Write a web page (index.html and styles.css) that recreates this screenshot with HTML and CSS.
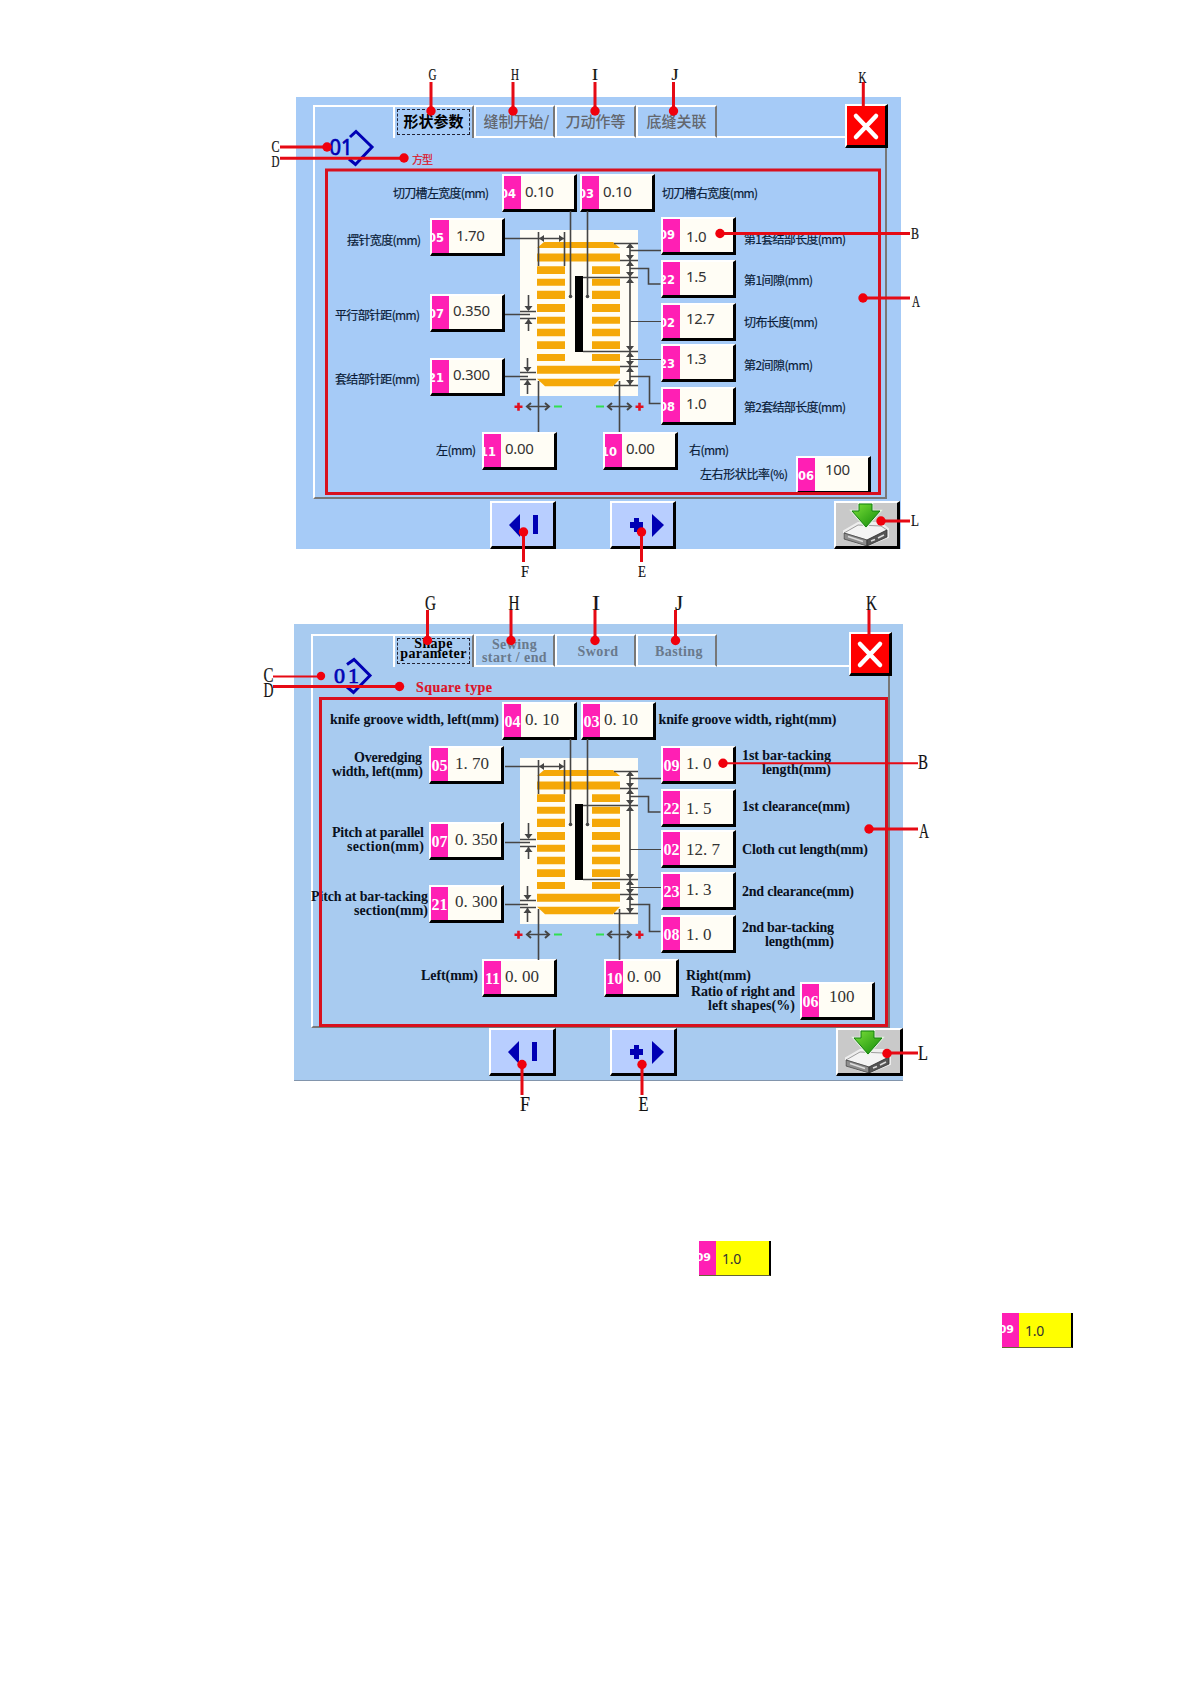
FILE: index.html
```
<!DOCTYPE html>
<html lang="zh-CN">
<head>
  <meta charset="UTF-8">
  <title>Shape parameter</title>
  <link rel="stylesheet" href="styles.css">
</head>
<body>
  <section class="figure figure-cn">
    <div class="screen">
      <div class="tabs">
        <div class="tab-lead"></div>
        <div class="tab active"><span>形状参数</span></div>
        <div class="tab"><span>缝制开始/</span></div>
        <div class="tab"><span>刀动作等</span></div>
        <div class="tab"><span>底缝关联</span></div>
        <div class="tab-fill"></div>
      </div>
      <div class="sheet"></div>
      <div class="footer">
        <button class="btn"><svg width="60" height="43"><use href="#prev"/></svg></button>
        <button class="btn"><svg width="60" height="43"><use href="#next"/></svg></button>
        <button class="btn save"><svg width="60" height="43"><use href="#disk"/></svg></button>
      </div>
      <button class="close"><svg width="38" height="38"><path d="M9 9L29 30M29 9L9 30"/></svg></button>
      <div class="field f04"><b>04</b><i>0.10</i></div>
      <div class="field f03"><b>03</b><i>0.10</i></div>
      <div class="field f05"><b>05</b><i>1.70</i></div>
      <div class="field f07"><b>07</b><i>0.350</i></div>
      <div class="field f21"><b>21</b><i>0.300</i></div>
      <div class="field f11"><b>11</b><i>0.00</i></div>
      <div class="field f10"><b>10</b><i>0.00</i></div>
      <div class="field f09"><b>09</b><i>1.0</i></div>
      <div class="field f22"><b>22</b><i>1.5</i></div>
      <div class="field f02"><b>02</b><i>12.7</i></div>
      <div class="field f23"><b>23</b><i>1.3</i></div>
      <div class="field f08"><b>08</b><i>1.0</i></div>
      <div class="field f06"><b>06</b><i>100</i></div>
    </div>

    <svg class="overlay" viewBox="0 0 1190 590" width="1190" height="590">
      <defs>
        <g id="prev">
          <path d="M17 22L28 11V34z" fill="#0000b4"/>
          <path d="M41 12h5v19h-5z" fill="#0000b4"/>
        </g>
        <g id="next">
          <path d="M22 15h5v4h4v6h-4v4h-5v-4h-4v-6h4z" fill="#0000b4"/>
          <path d="M40 11L52 22L40 34z" fill="#0000b4"/>
        </g>
        <linearGradient id="green" x1="0" y1="0" x2="1" y2="1">
          <stop offset="0" stop-color="#7be03a"/>
          <stop offset="1" stop-color="#118a08"/>
        </linearGradient>
        <g id="disk">
          <path d="M8 28L22 20H45L52 26V34L30 43L8 35z" fill="#eee" stroke="#eee" stroke-width="2"/>
          <path d="M8 30L22 22L45 23L51 27L31 37z" fill="#f4f4f4" stroke="#777" stroke-width=".7"/>
          <path d="M8 30L31 37V43L8 36z" fill="#8d8d8d" stroke="#444" stroke-width=".8"/>
          <path d="M31 37L51 27V34L31 43z" fill="#555" stroke="#333" stroke-width=".8"/>
          <path d="M12 33.500L27 38.500" stroke="#ddd" stroke-width="1.500"/>
          <path d="M35 38L39 36.500M42 35L48 32" stroke="#ddd" stroke-width="1.500"/>
          <path d="M23 1H36V8H44L30 24L16 8H23z" fill="url(#green)" stroke="#e5f5e0" stroke-width="2.500"/>
          <path d="M23 1H36V8H44L30 24L16 8H23z" fill="url(#green)" stroke="#128010"/>
        </g>

        <!-- stitch pattern with its dimension lines -->
        <g id="stitch">
          <path d="M520 230h118v166H520z" fill="#fffdf5"/>
          <g fill="#f5a808">
            <path d="M537 248L544 242H613L620 248z"/>
            <path d="M537 253.500h83v8h-83zM537 365.700h83v8h-83z"/>
            <path d="M537 378.700H620L613 386.300H545z"/>
            <path d="M537 266.300h28v7.700h-28zM537 278.700h28v7h-28zM537 290.700h28v8.300h-28zM537 304h28v8h-28zM537 316.700h28v7h-28zM537 328.700h28v7.600h-28zM537 341.300h28v7.700h-28zM537 354h28v7h-28z"/>
            <path d="M592 266.300h28v7.700h-28zM592 278.700h28v7h-28zM592 290.700h28v8.300h-28zM592 304h28v8h-28zM592 316.700h28v7h-28zM592 328.700h28v7.600h-28zM592 341.300h28v7.700h-28zM592 354h28v7h-28z"/>
          </g>
          <path d="M575 276h8v76h-8z"/>
          <g fill="none" stroke="#454545" stroke-width="1.600">
            <path d="M583 277.500h55M583 351.500h55M614 243.500h24M620 260.500h18M620 366.500h18M614 385.500h24M630 243v143"/>
            <path d="M630 250.500h31M630 268.500h18.500v15.500h12M630 376.500h19.500v27h11"/>
            <path d="M630 321.500h31M630 359.500h31" stroke-width="1"/>
            <path d="M505 238.500h59M538.500 232v34M564.500 232v34M570.500 211v85M587.500 211v85"/>
            <path d="M520 311.500h16M520 318.500h16M505 314.500h25M528.500 295v15M528.500 319v12"/>
            <path d="M520 372.500h16M520 379.500h16M505 376.500h23M527.500 358v13M527.500 380v14"/>
            <path d="M538.500 381v51M619.500 381v51M528 406.500h21M609 406.500h21"/>
            <path d="M531 403l-4 3.500l4 3.500M545 403l4 3.500l-4 3.500M612 403l-4 3.500l4 3.500M627 403l4 3.500l-4 3.500" stroke-width="2"/>
          </g>
          <g fill="#454545">
            <path d="M630 243l-4 5h8zM630 260l-4-5h8zM630 261l-4 5h8zM630 277l-4-5h8zM630 278l-4 5h8zM630 351l-4-5h8zM630 352l-4 5h8zM630 366l-4-5h8zM630 367l-4 5h8zM630 385l-4-5h8z"/>
            <path d="M539 238.500l5-3.500v7zM564 238.500l-5-3.500v7zM528.500 311l-4-5h8zM528.500 319l-4 5h8zM527.500 372l-4-5h8zM527.500 380l-4 5h8z"/>
            <circle cx="570.500" cy="296.500" r="1.800"/><circle cx="587.500" cy="296.500" r="1.800"/>
          </g>
          <path d="M514.500 406.700h8M518.500 402.700v8M635.500 406.700h8M639.500 402.700v8" stroke="#e01020" stroke-width="2.600"/>
          <path d="M554 406.500h8M596 406.500h8" stroke="#30e050" stroke-width="2"/>
        </g>
      </defs>

      <use href="#stitch"/>
      <path class="diamond" d="M350 137L356 131.500L372 147L355.500 164.500L349 159"/>
      <text class="program" x="329.500" y="154.500" textLength="23" lengthAdjust="spacingAndGlyphs">01</text>
      <text class="type" x="412" y="164" textLength="21">方型</text>
      <g class="labels">
        <text x="393" y="198" textLength="96">切刀槽左宽度(mm)</text>
        <text x="662" y="198" textLength="96">切刀槽右宽度(mm)</text>
        <text x="347" y="245" textLength="74">摆针宽度(mm)</text>
        <text x="335" y="320" textLength="85">平行部针距(mm)</text>
        <text x="335" y="384" textLength="85">套结部针距(mm)</text>
        <text x="436" y="455" textLength="40">左(mm)</text>
        <text x="689" y="455" textLength="40">右(mm)</text>
        <text x="700" y="479" textLength="88">左右形状比率(%)</text>
        <text x="744" y="244" textLength="102">第1套结部长度(mm)</text>
        <text x="744" y="285" textLength="69">第1间隙(mm)</text>
        <text x="744" y="327" textLength="74">切布长度(mm)</text>
        <text x="744" y="370" textLength="69">第2间隙(mm)</text>
        <text x="744" y="412" textLength="102">第2套结部长度(mm)</text>
      </g>
      <path class="area" d="M326.500 170H879.500V493.500H326.500z"/>

      <g class="leads">
        <path d="M431 82v29M513 82v29M595 82v29M673.500 82v29M863.300 82v25M280 147h47M280 158.300h124M720 233.500h190M863 298h47M881 521h29M523.500 532v30M641.500 532v30"/>
        <circle cx="431" cy="111" r="4.700"/><circle cx="513" cy="111" r="4.700"/>
        <circle cx="595" cy="111" r="4.700"/><circle cx="673.500" cy="111" r="4.700"/>
        <circle cx="327" cy="147" r="4.700"/><circle cx="404" cy="158" r="4.700"/>
        <circle cx="720" cy="233.500" r="4.700"/><circle cx="863" cy="298" r="4.700"/>
        <circle cx="881" cy="521" r="4.700"/><circle cx="523.500" cy="532" r="4.700"/>
        <circle cx="641.500" cy="532" r="4.700"/>
      </g>
      <g class="letters">
        <text x="428.500" y="80" textLength="8" lengthAdjust="spacingAndGlyphs">G</text>
        <text x="511" y="80" textLength="8" lengthAdjust="spacingAndGlyphs">H</text>
        <text x="592" y="80" textLength="6" lengthAdjust="spacingAndGlyphs">I</text>
        <text x="671.500" y="80" textLength="7" lengthAdjust="spacingAndGlyphs">J</text>
        <text x="858.500" y="83" textLength="8" lengthAdjust="spacingAndGlyphs">K</text>
        <text x="271.500" y="152" textLength="8" lengthAdjust="spacingAndGlyphs">C</text>
        <text x="271.500" y="166.500" textLength="8" lengthAdjust="spacingAndGlyphs">D</text>
        <text x="911" y="238.500" textLength="8" lengthAdjust="spacingAndGlyphs">B</text>
        <text x="912" y="307" textLength="8" lengthAdjust="spacingAndGlyphs">A</text>
        <text x="911" y="526" textLength="8" lengthAdjust="spacingAndGlyphs">L</text>
        <text x="521" y="577" textLength="8" lengthAdjust="spacingAndGlyphs">F</text>
        <text x="638" y="577" textLength="8" lengthAdjust="spacingAndGlyphs">E</text>
      </g>
    </svg>
  </section>

  <section class="figure figure-en" lang="en">
    <div class="screen">
      <div class="tabs">
        <div class="tab-lead"></div>
        <div class="tab active"><span>Shape<br>parameter</span></div>
        <div class="tab"><span>Sewing<br>start / end</span></div>
        <div class="tab"><span>Sword</span></div>
        <div class="tab"><span>Basting</span></div>
        <div class="tab-fill"></div>
      </div>
      <div class="sheet"></div>
      <div class="footer">
        <button class="btn"><svg width="60" height="43"><use href="#prev"/></svg></button>
        <button class="btn"><svg width="60" height="43"><use href="#next"/></svg></button>
        <button class="btn save"><svg width="60" height="43"><use href="#disk"/></svg></button>
      </div>
      <button class="close"><svg width="38" height="38"><path d="M9 9L29 30M29 9L9 30"/></svg></button>
      <div class="field f04"><b>04</b><i>0. 10</i></div>
      <div class="field f03"><b>03</b><i>0. 10</i></div>
      <div class="field f05"><b>05</b><i>1. 70</i></div>
      <div class="field f07"><b>07</b><i>0. 350</i></div>
      <div class="field f21"><b>21</b><i>0. 300</i></div>
      <div class="field f11"><b>11</b><i>0. 00</i></div>
      <div class="field f10"><b>10</b><i>0. 00</i></div>
      <div class="field f09"><b>09</b><i>1. 0</i></div>
      <div class="field f22"><b>22</b><i>1. 5</i></div>
      <div class="field f02"><b>02</b><i>12. 7</i></div>
      <div class="field f23"><b>23</b><i>1. 3</i></div>
      <div class="field f08"><b>08</b><i>1. 0</i></div>
      <div class="field f06"><b>06</b><i>100</i></div>
    </div>

    <svg class="overlay" viewBox="0 590 1190 540" width="1190" height="540">
      <use href="#stitch" y="528"/>
      <path class="diamond" d="M347 664.500L354 659.500L370 675.500L353.500 692.500L347 687"/>
      <text class="program" x="334" y="682.500" textLength="25">01</text>
      <text class="type" x="416" y="692" textLength="76">Square type</text>
      <g class="labels">
        <text x="330" y="724" textLength="169">knife groove width, left(mm)</text>
        <text x="658.500" y="724" textLength="178">knife groove width, right(mm)</text>
        <text x="354" y="762" textLength="68">Overedging</text>
        <text x="332" y="775.500" textLength="91">width, left(mm)</text>
        <text x="332" y="837" textLength="92">Pitch at parallel</text>
        <text x="347" y="850.500" textLength="77">section(mm)</text>
        <text x="311" y="900.500" textLength="117">Pitch at bar-tacking</text>
        <text x="354" y="915" textLength="74">section(mm)</text>
        <text x="421" y="980" textLength="57">Left(mm)</text>
        <text x="686" y="980" textLength="65">Right(mm)</text>
        <text x="691" y="996" textLength="104">Ratio of right and</text>
        <text x="708" y="1009.500" textLength="87">left shapes(%)</text>
        <text x="742" y="760" textLength="89">1st bar-tacking</text>
        <text x="762" y="774" textLength="69">length(mm)</text>
        <text x="742" y="811" textLength="108">1st clearance(mm)</text>
        <text x="742" y="853.500" textLength="126">Cloth cut length(mm)</text>
        <text x="742" y="896" textLength="112">2nd clearance(mm)</text>
        <text x="742" y="931.500" textLength="92">2nd bar-tacking</text>
        <text x="765" y="946" textLength="69">length(mm)</text>
      </g>
      <path class="area" d="M320.500 698.500H886.500V1025.500H320.500z"/>

      <g class="leads">
        <path d="M427.500 610v30M511 610v30M595 610v30M675.500 610v30M869 610v26M273 686.500h126M869 829h49M887 1053h31M522 1065v30M642 1065v30"/>
        <path class="thin" d="M273 676.500h48M723 763.300h195"/>
        <circle cx="427.500" cy="640.500" r="4.700"/><circle cx="511" cy="640.500" r="4.700"/>
        <circle cx="595" cy="640.500" r="4.700"/><circle cx="675.500" cy="640.500" r="4.700"/>
        <circle cx="321" cy="676" r="4.200"/><circle cx="399.500" cy="686.500" r="4.700"/>
        <circle cx="723" cy="763.300" r="4.700"/><circle cx="869" cy="829" r="4.700"/>
        <circle cx="887" cy="1053.500" r="4.700"/><circle cx="522" cy="1064.500" r="4.700"/>
        <circle cx="642" cy="1064.500" r="4.700"/>
      </g>
      <g class="letters">
        <text x="425" y="609.500" textLength="11" lengthAdjust="spacingAndGlyphs">G</text>
        <text x="508.500" y="609.500" textLength="11" lengthAdjust="spacingAndGlyphs">H</text>
        <text x="592" y="609.500" textLength="8" lengthAdjust="spacingAndGlyphs">I</text>
        <text x="675" y="609.500" textLength="8" lengthAdjust="spacingAndGlyphs">J</text>
        <text x="866" y="609.500" textLength="11" lengthAdjust="spacingAndGlyphs">K</text>
        <text x="263.500" y="682" textLength="10" lengthAdjust="spacingAndGlyphs">C</text>
        <text x="263.500" y="696.500" textLength="10" lengthAdjust="spacingAndGlyphs">D</text>
        <text x="918" y="769" textLength="10" lengthAdjust="spacingAndGlyphs">B</text>
        <text x="919" y="838" textLength="10" lengthAdjust="spacingAndGlyphs">A</text>
        <text x="918" y="1059.500" textLength="10" lengthAdjust="spacingAndGlyphs">L</text>
        <text x="520" y="1111" textLength="10" lengthAdjust="spacingAndGlyphs">F</text>
        <text x="638.500" y="1111" textLength="10" lengthAdjust="spacingAndGlyphs">E</text>
      </g>
    </svg>
  </section>

  <section class="samples">
    <div class="chip"><b>09</b><i>1.0</i></div>
    <div class="chip second"><b>09</b><i>1.0</i></div>
  </section>
</body>
</html>
```
FILE: styles.css
```
* {
  box-sizing: border-box;
}
body {
  margin: 0;
  background: #fff;
  font-family: "Noto Sans", "Noto Sans CJK SC", sans-serif;
}
.figure {
  position: relative;
  width: 1190px;
}
.figure-cn {
  height: 590px;
  padding: 97px 0 0 296px;
}
.figure-en {
  height: 540px;
  padding: 34px 0 0 294px;
}
.overlay {
  position: absolute;
  left: 0;
  top: 0;
  pointer-events: none;
}

/* Screen */
.screen {
  position: relative;
  display: flex;
  flex-direction: column;
  width: 605px;
  height: 452px;
  padding: 8px 0 0 17px;
  background: #a6cbf7;
}
.figure-en .screen {
  width: 609px;
  height: 457px;
  padding-top: 10px;
  background: #a8cbf0;
  border-bottom: 1px solid #8295ac;
}
.tabs {
  display: flex;
  width: 574px;
  height: 33px;
}
.tab-lead {
  width: 80px;
  border-top: 2px solid #fff;
  border-left: 2px solid #fff;
}
.tab {
  display: flex;
  align-items: center;
  justify-content: center;
  width: 81px;
  overflow: hidden;
  border-top: 2px solid #fff;
  border-left: 2px solid #fff;
  border-right: 2px solid #777;
  border-bottom: 2px solid #fff;
  color: #63676e;
  font: 500 15px "Noto Sans CJK SC", sans-serif;
  white-space: nowrap;
}
.figure-cn .tab:nth-child(3) {
  padding-left: 4px;
}
.figure-cn .tab:nth-child(n+3) span {
  margin-top: -2px;
}
.tab.active {
  border-bottom: 0;
  padding: 1px 2px 3px;
  color: #000;
  font-weight: 700;
}
.tab.active span {
  flex: 1;
  height: 26px;
  line-height: 21px;
  text-align: center;
  border: 1.5px dashed #223;
}
.tab-fill {
  flex: 1;
  border-bottom: 2px solid #fff;
}
.figure-en .tab-lead {
  width: 82px;
}
.figure-en .tab {
  font: bold 14px/13px "Liberation Serif", serif;
  letter-spacing: 0.4px;
  text-align: center;
  color: #69798c;
}
.figure-en .tab:nth-child(n+4) {
  padding: 2px 0 0 5px;
}
.figure-en .tab.active {
  color: #000;
}
.figure-en .tab.active span {
  line-height: 10.5px;
}
.sheet {
  width: 574px;
  height: 361px;
  border-left: 2px solid #fff;
  border-right: 2px solid #777;
  border-bottom: 2px solid #777;
}
.footer {
  display: flex;
  gap: 54px;
  padding: 2px 1px 0 177px;
}
.figure-en .sheet {
  width: 579px;
}
.figure-en .footer {
  gap: 54px;
  padding: 0 0 0 178px;
}
.btn,
.close {
  padding: 0;
  border: solid;
  border-width: 2px 3px 3px 2px;
  border-color: #fff #000 #000 #fff;
}
.btn {
  width: 66px;
  height: 48px;
  background: #b8ceff;
}
.figure-en .btn {
  width: 67px;
}
.btn svg,
.close svg {
  display: block;
}
.btn.save {
  margin-left: auto;
  background: #c9c9c9;
}
.close {
  position: absolute;
  left: 549px;
  top: 7px;
  width: 43px;
  height: 44px;
  background: #f00;
}
.figure-en .close {
  left: 555px;
  top: 8px;
}
.close path {
  stroke: #fff;
  stroke-width: 4.5;
  stroke-linecap: round;
}

/* Parameter fields */
.field {
  position: absolute;
  display: flex;
  width: 75px;
  height: 38px;
  border: solid;
  border-width: 2px 3px 3px 2px;
  border-color: #fff #000 #000 #fff;
  background: #fffdf5;
}
.field b,
.chip b {
  display: flex;
  justify-content: flex-end;
  width: 17px;
  padding-right: 5px;
  overflow: hidden;
  background: #ff1fb4;
  color: #fff;
  font: bold 11.5px/37px "DejaVu Sans", sans-serif;
}
.field i,
.chip i {
  padding-left: 4px;
  font: 15px/28px "Noto Sans", sans-serif;
  letter-spacing: -0.3px;
  color: #333;
}
.f04 { left: 206px; top: 77px; }
.f03 { left: 284px; top: 77px; }
.f05 { left: 134px; top: 121px; }
.f07 { left: 134px; top: 197px; }
.f21 { left: 134px; top: 261px; }
.f11 { left: 186px; top: 335px; }
.f10 { left: 307px; top: 335px; }
.f09 { left: 365px; top: 120px; }
.f22 { left: 365px; top: 163px; }
.f02 { left: 365px; top: 206px; }
.f23 { left: 365px; top: 247px; }
.f08 { left: 365px; top: 290px; }
.f06 { left: 500px; top: 359px; }
.f04 i, .f03 i { line-height: 31px; }
.f05 i { padding-left: 7px; line-height: 31px; }
.f09 i { line-height: 35px; }
.f09 i, .f22 i, .f02 i, .f23 i, .f08 i { padding-left: 6px; }
.f23 i { line-height: 24px; }
.f02 i { line-height: 27px; }
.f06 i { padding-left: 10px; line-height: 23px; }
.f06 b { padding-right: 1px; }
.f09 b { line-height: 33px; }

.figure-en .field b {
  justify-content: center;
  padding: 0;
  font: bold 16px/35px "Liberation Serif", serif;
}
.figure-en .field i {
  font: 17px/32px "Liberation Serif", serif;
  letter-spacing: 0;
  white-space: nowrap;
}
.figure-en .f22 i,
.figure-en .f02 i,
.figure-en .f08 i { line-height: 35px; }
.figure-en .f07 i,
.figure-en .f21 i { padding-left: 7px; }
.figure-en .f21 i { line-height: 29px; }
.figure-en .f06 i { line-height: 26px; }
.figure-en .f04 { left: 208px; top: 78px; }
.figure-en .f03 { left: 287px; top: 78px; }
.figure-en .f05 { left: 135px; top: 122px; }
.figure-en .f07 { left: 135px; top: 198px; }
.figure-en .f21 { left: 135px; top: 261px; }
.figure-en .f11 { left: 188px; top: 335px; }
.figure-en .f10 { left: 310px; top: 335px; }
.figure-en .f09 { left: 367px; top: 122px; }
.figure-en .f22 { left: 367px; top: 165px; }
.figure-en .f02 { left: 367px; top: 206px; }
.figure-en .f23 { left: 367px; top: 248px; }
.figure-en .f08 { left: 367px; top: 291px; }
.figure-en .f06 { left: 506px; top: 358px; }

/* Overlay drawing */
.labels {
  font: 12px "Noto Sans CJK SC", sans-serif;
  fill: #0a1c38;
  stroke: #0a1c38;
  stroke-width: 0.2;
}
.figure-en .labels {
  font: bold 14px "Liberation Serif", serif;
  fill: #081020;
  stroke: none;
}
.type {
  font: 11px "Noto Sans CJK SC", sans-serif;
  fill: #dc1428;
  stroke: #dc1428;
  stroke-width: 0.2;
}
.figure-en .type {
  font: bold 14px "Liberation Serif", serif;
}
.program {
  font: 21px "Noto Sans", sans-serif;
  fill: #0000b4;
  stroke: #0000b4;
  stroke-width: 0.7;
}
.figure-en .program {
  font: 22px "Liberation Serif", serif;
}
.diamond {
  fill: none;
  stroke: #0000b4;
  stroke-width: 3;
}
.area {
  fill: none;
  stroke: #d8101e;
  stroke-width: 3;
}
.leads {
  fill: #f0000c;
}
.leads path {
  stroke: #e60a14;
  stroke-width: 3;
}
.leads .thin {
  stroke-width: 2;
}
.letters {
  font: 16px "Liberation Serif", serif;
  fill: #111;
  stroke: #111;
  stroke-width: 0.2;
}
.figure-en .letters {
  font-size: 20px;
}

/* Highlighted field samples */
.samples {
  padding: 111px 0 0 699px;
}
.chip {
  display: flex;
  width: 72px;
  height: 35px;
  background: #ff0;
  border-right: 2px solid #000;
  border-bottom: 1px solid #663;
}
.chip b {
  font-size: 11px;
  line-height: 33px;
}
.chip i {
  padding-left: 6px;
  font-size: 14px;
  line-height: 36px;
}
.chip.second {
  width: 71px;
  margin: 37px 0 0 303px;
}
```
